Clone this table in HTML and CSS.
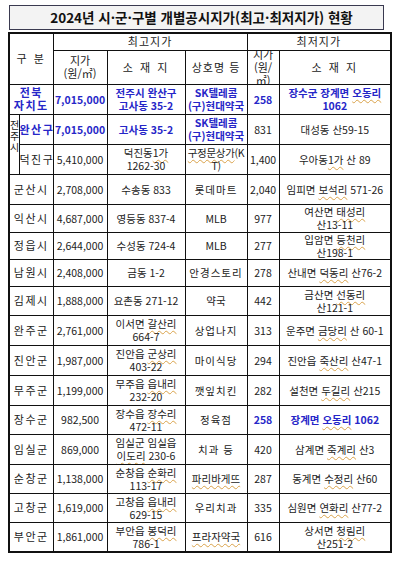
FILE: index.html
```html
<!DOCTYPE html>
<html lang="ko">
<head>
<meta charset="utf-8">
<title>2024년 시·군·구별 개별공시지가 현황</title>
<link rel="stylesheet" href="styles.css">
</head>
<body>
<div class="page">
  <div class="title">2024년 시·군·구별 개별공시지가(최고·최저지가) 현황</div>
  <table class="grid">
    <colgroup>
      <col class="c-a"><col class="c-b"><col class="c-c"><col class="c-d"><col class="c-e"><col class="c-f"><col class="c-g">
    </colgroup>
    <thead>
      <tr class="h1">
        <th colspan="2" rowspan="2" class="wide">구 분</th>
        <th colspan="3" class="sp1">최고지가</th>
        <th colspan="2" class="sp1">최저지가</th>
      </tr>
      <tr class="h2">
        <th class="hl">지가<br>(원/㎡)</th>
        <th class="wide">소 재 지</th>
        <th class="sp1">상호명 등</th>
        <th class="narrow"><div class="clip">지가<br>(원/<br>㎡)</div></th>
        <th class="wide">소 재 지</th>
      </tr>
    </thead>
    <tbody>
      <tr class="r30 blue">
        <td colspan="2" class="nm">전북<br>자치도</td>
        <td>7,015,000</td>
        <td>전주시 완산구<br>고사동 35-2</td>
        <td>SK텔레콤<br>(구)현대약국</td>
        <td>258</td>
        <td>장수군 장계면 <span class="sq">오동리</span><br>1062</td>
      </tr>
      <tr class="r30">
        <td rowspan="2" class="vert"><div class="vt">전<br>주<br>시</div></td>
        <td class="nm b">완산구</td>
        <td class="b">7,015,000</td>
        <td class="b">고사동 35-2</td>
        <td class="b">SK텔레콤<br>(구)현대약국</td>
        <td>831</td>
        <td>대성동 산59-15</td>
      </tr>
      <tr class="r30">
        <td class="nm">덕진구</td>
        <td>5,410,000</td>
        <td>덕진동<span class="sq">1가</span><br>1262-30</td>
        <td class="tight"><span class="sq">구정문상가</span>(K<br>T)</td>
        <td>1,400</td>
        <td>우아동<span class="sq">1가</span> 산 89</td>
      </tr>
      <tr class="r30">
        <td colspan="2" class="nm">군산시</td>
        <td>2,708,000</td>
        <td>수송동 833</td>
        <td class="sp1">롯데마트</td>
        <td>2,040</td>
        <td>임피면 <span class="sq">보석리</span> 571-26</td>
      </tr>
      <tr class="r28">
        <td colspan="2" class="nm">익산시</td>
        <td>4,687,000</td>
        <td>영등동 837-4</td>
        <td>MLB</td>
        <td>977</td>
        <td>여산면 <span class="sq">태성리</span><br>산13-11</td>
      </tr>
      <tr class="r27">
        <td colspan="2" class="nm">정읍시</td>
        <td>2,644,000</td>
        <td>수성동 724-4</td>
        <td>MLB</td>
        <td>277</td>
        <td>입암면 <span class="sq">등천리</span><br>산198-1</td>
      </tr>
      <tr class="r27">
        <td colspan="2" class="nm">남원시</td>
        <td>2,408,000</td>
        <td>금동 1-2</td>
        <td class="sp1">안경스토리</td>
        <td>278</td>
        <td>산내면 <span class="sq">덕동리</span> 산76-2</td>
      </tr>
      <tr class="r29">
        <td colspan="2" class="nm">김제시</td>
        <td>1,888,000</td>
        <td>요촌동 271-12</td>
        <td>약국</td>
        <td>442</td>
        <td>금산면 <span class="sq">선동리</span><br>산121-1</td>
      </tr>
      <tr class="r30">
        <td colspan="2" class="nm">완주군</td>
        <td>2,761,000</td>
        <td>이서면 <span class="sq">갈산리</span><br>664-7</td>
        <td class="sp1">상업나지</td>
        <td>313</td>
        <td>운주면 <span class="sq">금당리</span> 산 60-1</td>
      </tr>
      <tr class="r30">
        <td colspan="2" class="nm">진안군</td>
        <td>1,987,000</td>
        <td>진안읍 <span class="sq">군상리</span><br>403-22</td>
        <td class="sp1">마이식당</td>
        <td>294</td>
        <td>진안읍 <span class="sq">죽산리</span> 산47-1</td>
      </tr>
      <tr class="r30">
        <td colspan="2" class="nm">무주군</td>
        <td>1,199,000</td>
        <td>무주읍 <span class="sq">읍내리</span><br>232-20</td>
        <td class="sp1">깻잎치킨</td>
        <td>282</td>
        <td>설천면 <span class="sq">두길리</span> 산215</td>
      </tr>
      <tr class="r29">
        <td colspan="2" class="nm">장수군</td>
        <td>982,500</td>
        <td>장수읍 <span class="sq">장수리</span><br>472-11</td>
        <td class="sp1">정육점</td>
        <td class="b">258</td>
        <td class="b">장계면 <span class="sq">오동리</span> 1062</td>
      </tr>
      <tr class="r30">
        <td colspan="2" class="nm">임실군</td>
        <td>869,000</td>
        <td>임실군 임실읍<br><span class="sq">이도리</span> 230-6</td>
        <td class="sp1">치과 등</td>
        <td>420</td>
        <td>삼계면 <span class="sq">죽계리</span> 산3</td>
      </tr>
      <tr class="r29">
        <td colspan="2" class="nm">순창군</td>
        <td>1,138,000</td>
        <td>순창읍 <span class="sq">순화리</span><br>113-17</td>
        <td><span class="sq">파리바게뜨</span></td>
        <td>287</td>
        <td>동계면 <span class="sq">수정리</span> 산60</td>
      </tr>
      <tr class="r29">
        <td colspan="2" class="nm">고창군</td>
        <td>1,619,000</td>
        <td>고창읍 <span class="sq">읍내리</span><br>629-15</td>
        <td class="sp1">우리치과</td>
        <td>335</td>
        <td>심원면 <span class="sq">연화리</span> 산77-2</td>
      </tr>
      <tr class="r30">
        <td colspan="2" class="nm">부안군</td>
        <td>1,861,000</td>
        <td>부안읍 <span class="sq">봉덕리</span><br>786-1</td>
        <td><span class="sq">프라자약국</span></td>
        <td>616</td>
        <td>상서면 <span class="sq">청림리</span><br>산251-2</td>
      </tr>
    </tbody>
  </table>
</div>
</body>
</html>
```

FILE: styles.css
```css
* { box-sizing: border-box; }
html, body { margin: 0; padding: 0; background: #ffffff; }
body {
  font-family: "Noto Sans CJK KR", "Noto Sans", sans-serif;
  color: #222222;
}
.page {
  width: 400px;
  padding: 5px 0 0 8px;
}
.title {
  width: 375px;
  margin-left: 1px;
  height: 25px;
  border: 1px solid #3a3a50;
  background: #f3f3f3;
  font-size: 13.5px;
  font-weight: bold;
  line-height: 23px;
  text-align: center;
  color: #111111;
  padding-left: 10px;
  white-space: nowrap;
}
.grid {
  margin-top: 2px;
  width: 382px;
  border-collapse: collapse;
  table-layout: fixed;
  border: 2px solid #111111;
  font-size: 10.5px;
}
.c-a { width: 10px; }
.c-b { width: 34px; }
.c-c { width: 54px; }
.c-d { width: 78px; }
.c-e { width: 62px; }
.c-f { width: 32px; }
.c-g { width: 112px; }
.grid th, .grid td {
  border: 1px solid #111111;
  padding: 0;
  text-align: center;
  vertical-align: middle;
  white-space: nowrap;
  overflow: hidden;
  line-height: 13px;
  font-weight: normal;
}
.grid th { font-size: 11px; }
.h1 { height: 17px; }
.h2 { height: 34px; }
.hl { line-height: 14px; }
.narrow { line-height: 12px; }
.clip {
  height: 33px;
  overflow: hidden;
  display: flex;
  flex-direction: column;
  justify-content: center;
}
.wide { letter-spacing: 2px; }
.sp1 { letter-spacing: 1px; }
.nm { letter-spacing: 1.5px; font-size: 11px; }
.tight { letter-spacing: -0.3px; }
.r27 { height: 27px; }
.r28 { height: 28px; }
.r29 { height: 29px; }
.r30 { height: 30px; }
.r31 { height: 31px; }
.blue td, td.b {
  color: #2626c8;
  font-weight: bold;
}
td.vert {
  vertical-align: top;
  padding: 0;
}
.vt {
  width: 9px;
  font-size: 10px;
  line-height: 11px;
  padding-top: 4px;
  white-space: normal;
  text-align: center;
  overflow: hidden;
}
.sq {
  text-decoration: underline wavy #d9a24a;
  text-decoration-thickness: 1px;
  text-underline-offset: 2px;
}
```
